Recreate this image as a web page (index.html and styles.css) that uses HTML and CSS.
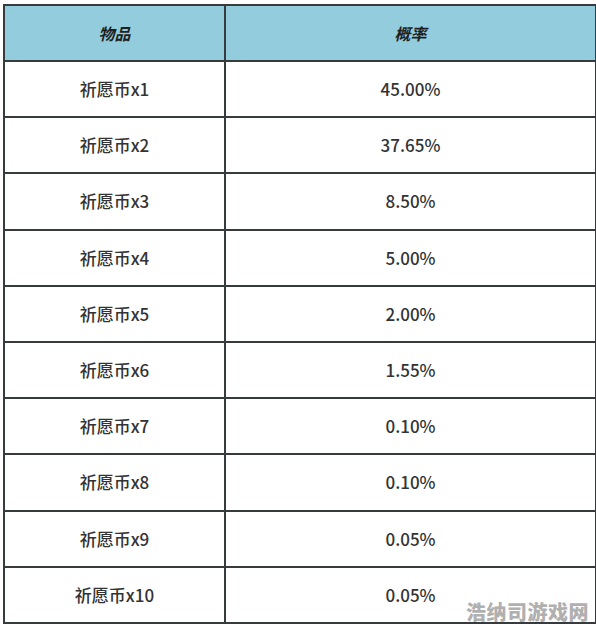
FILE: index.html
```html
<!DOCTYPE html>
<html lang="zh-CN">
<head>
<meta charset="utf-8">
<title>祈愿币概率</title>
<link rel="stylesheet" href="styles.css">
</head>
<body>
<div class="sheet">
  <table class="rates">
    <thead>
      <tr><th class="c1">物品</th><th class="c2">概率</th></tr>
    </thead>
    <tbody>
      <tr><td>祈愿币x1</td><td>45.00%</td></tr>
      <tr><td>祈愿币x2</td><td>37.65%</td></tr>
      <tr><td>祈愿币x3</td><td>8.50%</td></tr>
      <tr><td>祈愿币x4</td><td>5.00%</td></tr>
      <tr><td>祈愿币x5</td><td>2.00%</td></tr>
      <tr><td>祈愿币x6</td><td>1.55%</td></tr>
      <tr><td>祈愿币x7</td><td>0.10%</td></tr>
      <tr><td>祈愿币x8</td><td>0.10%</td></tr>
      <tr><td>祈愿币x9</td><td>0.05%</td></tr>
      <tr><td>祈愿币x10</td><td>0.05%</td></tr>
    </tbody>
  </table>
  <div class="watermark">浩纳司游戏网</div>
</div>
</body>
</html>
```

FILE: styles.css
```css
html, body {
  margin: 0;
  padding: 0;
  background: #ffffff;
}

body {
  font-family: "Noto Sans CJK SC", "Noto Sans", sans-serif;
  color: #333333;
}

.sheet {
  position: relative;
  width: 596px;
  height: 630px;
  padding: 4px 0 0 3px;
  box-sizing: border-box;
}

.rates {
  border-collapse: collapse;
  table-layout: fixed;
  width: 590px;
}

.rates th,
.rates td {
  border: 2px solid #363b3e;
  height: 54.2px;
  padding: 0;
  text-align: center;
  vertical-align: middle;
  font-size: 17px;
  line-height: 20px;
  font-weight: 500;
}

.rates th {
  background: #93cddd;
  font-style: italic;
  font-weight: 700;
  color: #1f1f1f;
  height: 54px;
  font-size: 16px;
}

.rates .c1 { width: 219px; }
.rates .c2 { width: 369px; }

.watermark {
  position: absolute;
  right: 7px;
  bottom: 6px;
  font-size: 20px;
  line-height: 24px;
  font-weight: 900;
  color: #b0b0b0;
  letter-spacing: 0.5px;
}
```
